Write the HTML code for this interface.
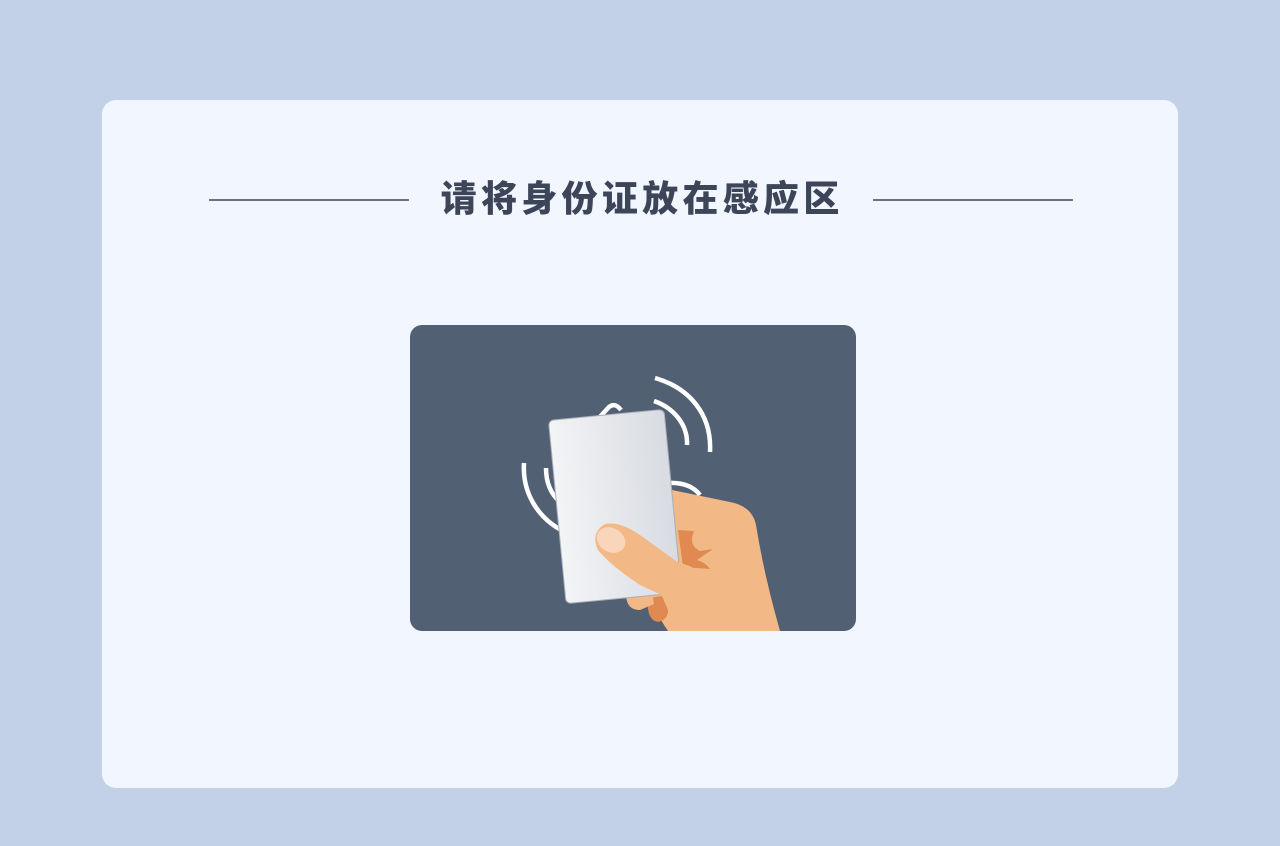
<!DOCTYPE html>
<html><head><meta charset="utf-8"><style>
html,body{margin:0;padding:0;width:1280px;height:846px;background:#c2d1e8;overflow:hidden;}
.card{position:absolute;left:102px;top:100px;width:1076px;height:688px;background:#f2f6fe;border-radius:14px;}
.line{position:absolute;top:199px;height:2px;width:200px;background:#6a7182;}
.title{position:absolute;top:176px;left:340px;width:600px;text-align:center;white-space:nowrap;font-family:"Liberation Sans","Noto Sans CJK SC",sans-serif;font-weight:900;font-size:36px;letter-spacing:4.3px;color:#3d4659;line-height:46px;padding-left:4.3px;box-sizing:border-box;}
.box{position:absolute;left:410px;top:325px;width:446px;height:306px;background:#526074;border-radius:12px;overflow:hidden;}
svg{position:absolute;left:0;top:0;}
</style></head><body>
<div class="card"></div>
<div class="line" style="left:209px"></div>
<div class="line" style="left:873px"></div>
<div class="title">请将身份证放在感应区</div>
<div class="box">
<svg width="446" height="306" viewBox="410 325 446 306">
<defs><linearGradient id="g" x1="0" x2="1" y1="0" y2="0"><stop offset="0" stop-color="#f3f4f6"/><stop offset="1" stop-color="#d8dbe1"/></linearGradient></defs>
<g fill="none" stroke="#fff" stroke-width="4.5">
<path d="M655,378 C690,388 712,415 710,452"/>
<path d="M654,401 C674,408 688,425 687,445"/>
<path d="M524,463 C522,495 540,520 565,532"/>
<path d="M546,468 C546,485 552,495 560,502"/>
<path d="M668,483 Q690,482 700,495"/>
<path d="M597,420 L609,407 Q615,402 621,410"/>
</g>
<path d="M672,490 L730,502 Q752,506 756,525 Q764,575 780,631 L668,631 Q655,612 650,595 L660,560 Z" fill="#f2b987"/>
<path d="M678,530 L694,531 Q688,545 700,551 L713,549 L697,560 Q705,562 710,569 L683,567 Z" fill="#e08a52"/>
<path d="M648,598 Q646,620 658,622 Q668,620 668,610 L662,596 Z" fill="#e08a52"/>
<path d="M626,594 Q626,610 640,610 L654,604 L652,592 Z" fill="#f2b987"/>
<rect x="557" y="414.5" width="116" height="184" rx="5" fill="url(#g)" stroke="#a9aeb8" stroke-width="1" transform="rotate(-5.5 615 506.5)"/>
<path d="M605,524 Q620,521 640,535 L676,561 L692,567 L690,590 L668,598 L640,585 Q610,565 598,550 Q590,533 605,524 Z" fill="#f2b987"/>
<ellipse cx="611" cy="540" rx="15" ry="12" transform="rotate(30 611 540)" fill="#f8d5bb"/>
</svg>
</div>
</body></html>
